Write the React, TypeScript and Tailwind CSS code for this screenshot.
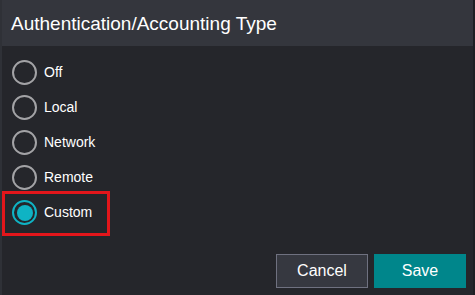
import { useState } from 'react';

const options = ['Off', 'Local', 'Network', 'Remote', 'Custom'];

function Radio({ checked }: { checked: boolean }) {
  return (
    <span
      className={`flex h-[25px] w-[25px] shrink-0 items-center justify-center rounded-full border-2 ${
        checked ? 'border-[#0fb3c4]' : 'border-[#a3a3a6]'
      }`}
    >
      {checked && <span className="h-[16px] w-[16px] rounded-full bg-[#0fb3c4]" />}
    </span>
  );
}

export default function App() {
  const [value, setValue] = useState('Custom');

  return (
    <div className="flex h-[295px] w-[475px] flex-col border-l-2 border-r-2 border-l-[#2f3137] border-r-[#1e1f23] bg-[#25262b] text-white font-[family-name:'Liberation_Sans',Arial,sans-serif]">
      {/* Header */}
      <div className="flex h-[46px] shrink-0 items-center bg-[#34363d] px-[9px]">
        <h1 className="text-[19px] leading-none">Authentication/Accounting Type</h1>
      </div>

      {/* Options */}
      <div className="flex flex-col pt-[9px]">
        {options.map((opt) => (
          <label
            key={opt}
            className="relative flex h-[35px] cursor-pointer items-center gap-[7px] pl-[10px]"
            onClick={() => setValue(opt)}
          >
            <Radio checked={value === opt} />
            <span className="text-[14px]">{opt}</span>
            {opt === 'Custom' && (
              <span className="pointer-events-none absolute -top-[4px] -bottom-[6px] left-0 w-[108px] border-[3px] border-[#e3161b]" />
            )}
          </label>
        ))}
      </div>

      {/* Footer */}
      <div className="mt-auto flex justify-end gap-[6px] pb-[7px] pr-[7px]">
        <button className="h-[34px] w-[92px] border border-[#6f7180] bg-[#363840] text-[16px] text-white">
          Cancel
        </button>
        <button className="h-[34px] w-[92px] bg-[#00868b] text-[16px] text-white">Save</button>
      </div>
    </div>
  );
}
